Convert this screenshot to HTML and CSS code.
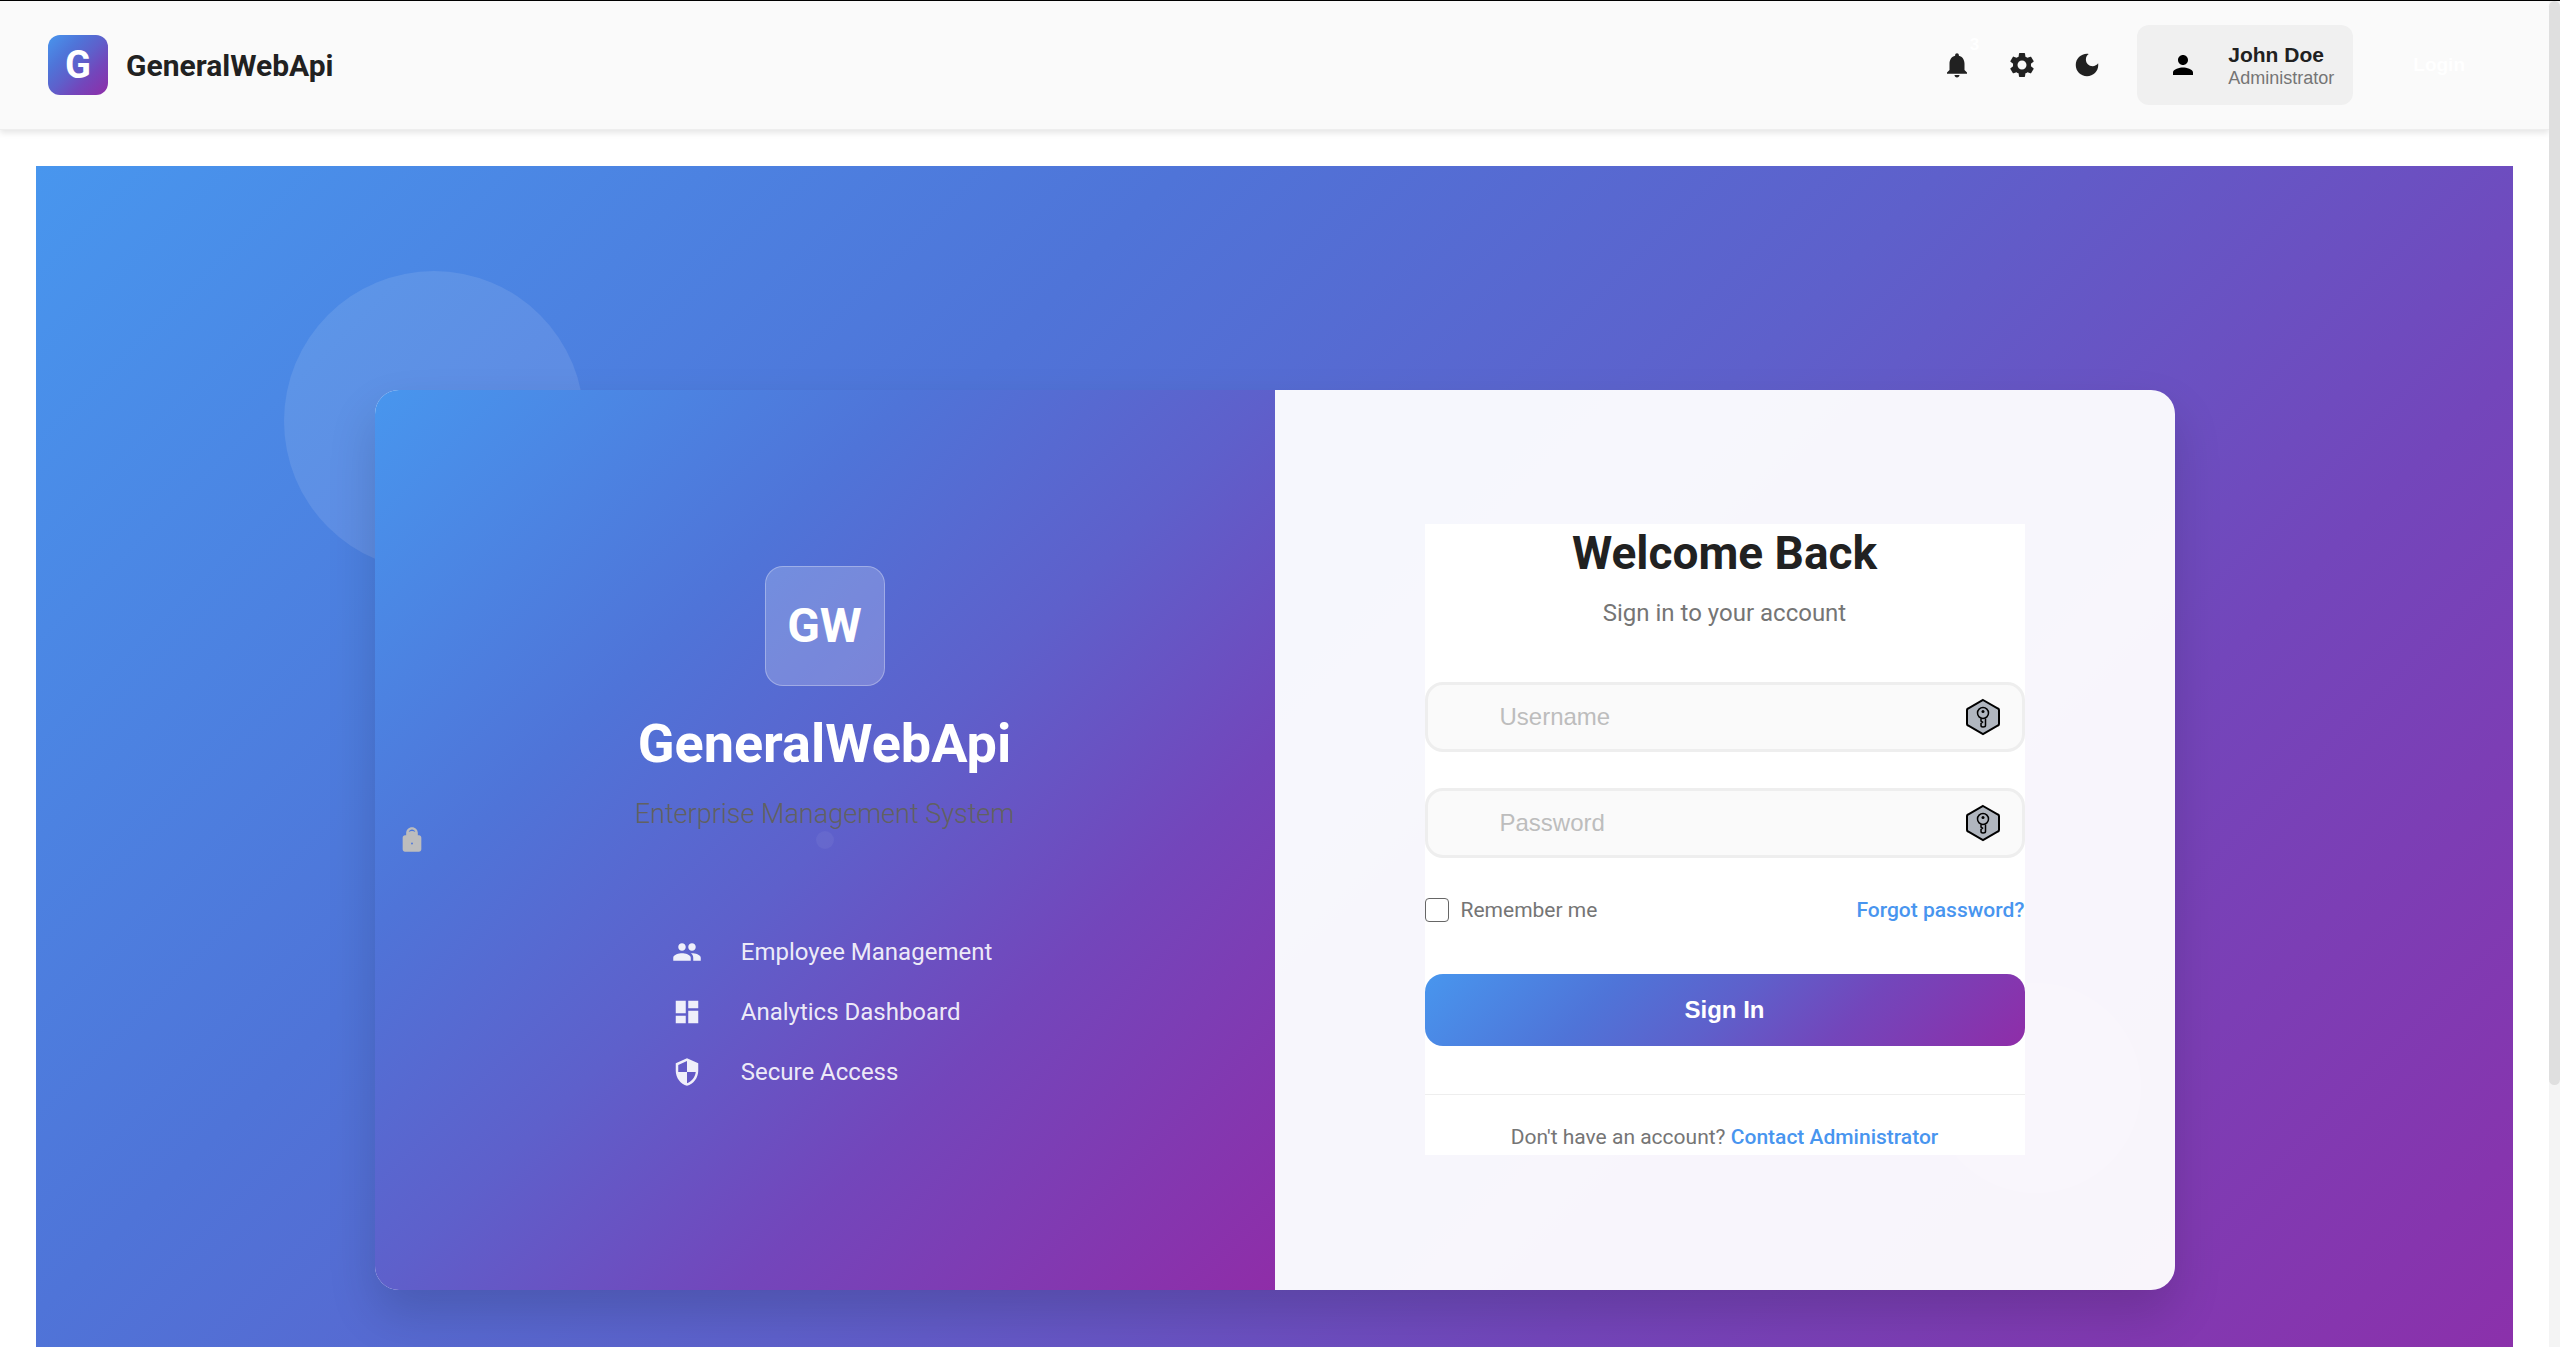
FILE: index.html
```html
<!DOCTYPE html>
<html lang="en">
<head>
<meta charset="utf-8">
<title>GeneralWebApi</title>
<link rel="stylesheet" href="styles.css">
</head>
<body>
<div class="app">
  <div class="page">
    <header class="topbar">
      <div class="brand">
        <div class="brand-mark">G</div>
        <span class="brand-name">GeneralWebApi</span>
      </div>
      <div class="actions">
        <button class="icon-button" type="button" aria-label="Notifications">
          <svg class="icon" viewBox="0 0 24 24"><path d="M12 22c1.1 0 2-.9 2-2h-4c0 1.1.89 2 2 2zm6-6v-5c0-3.070-1.640-5.640-4.500-6.320V4c0-.83-.67-1.500-1.500-1.500s-1.500.67-1.500 1.500v.68C7.630 5.360 6 7.920 6 11v5l-2 2v1h16v-1l-2-2z"/></svg>
          <span class="badge">3</span>
        </button>
        <button class="icon-button" type="button" aria-label="Settings">
          <svg class="icon" viewBox="0 0 24 24"><path d="M19.140 12.940c.04-.3.060-.61.060-.94 0-.32-.02-.64-.07-.94l2.030-1.580c.18-.14.23-.41.120-.61l-1.920-3.320c-.12-.22-.37-.29-.59-.22l-2.390.96c-.5-.38-1.030-.7-1.620-.94l-.36-2.540c-.04-.24-.24-.41-.48-.41h-3.840c-.24 0-.43.170-.47.410l-.36 2.540c-.59.240-1.130.570-1.620.940l-2.390-.96c-.22-.08-.47 0-.59.220L2.740 8.870c-.12.210-.08.470.120.610l2.030 1.580c-.05.300-.09.630-.09.940s.020.640.070.940l-2.030 1.580c-.18.140-.23.410-.12.610l1.920 3.320c.12.220.37.290.59.220l2.390-.96c.5.380 1.030.7 1.620.940l.36 2.540c.05.240.240.410.480.410h3.840c.24 0 .44-.17.47-.41l.36-2.540c.59-.24 1.130-.56 1.620-.94l2.390.96c.22.080.47 0 .59-.22l1.920-3.320c.12-.22.070-.47-.12-.61l-2.010-1.580zM12 15.600c-1.980 0-3.600-1.620-3.600-3.600s1.620-3.600 3.600-3.600 3.600 1.620 3.600 3.600-1.620 3.600-3.600 3.600z"/></svg>
        </button>
        <button class="icon-button" type="button" aria-label="Dark mode">
          <svg class="icon" viewBox="0 0 24 24"><path d="M12 3c-4.970 0-9 4.030-9 9s4.030 9 9 9 9-4.030 9-9c0-.46-.04-.92-.1-1.360-.98 1.370-2.580 2.260-4.400 2.260-2.980 0-5.400-2.420-5.400-5.400 0-1.810.89-3.420 2.260-4.400C12.920 3.040 12.460 3 12 3z"/></svg>
        </button>
        <button class="user" type="button">
          <svg class="icon user-icon" viewBox="0 0 24 24"><path d="M12 12c2.210 0 4-1.790 4-4s-1.790-4-4-4-4 1.790-4 4 1.790 4 4 4zm0 2c-2.670 0-8 1.340-8 4v2h16v-2c0-2.660-5.330-4-8-4z"/></svg>
          <span class="user-text">
            <span class="user-name">John Doe</span>
            <span class="user-role">Administrator</span>
          </span>
        </button>
        <button class="login" type="button">Login</button>
      </div>
    </header>

    <main class="hero">
      <div class="bubble bubble-large"></div>
      <div class="bubble bubble-medium"></div>
      <section class="card">
        <div class="intro">
          <div class="logo">GW</div>
          <h1 class="product">GeneralWebApi</h1>
          <p class="tagline">Enterprise Management System</p>
          <ul class="features">
            <li class="feature"><svg class="icon" viewBox="0 0 24 24"><path d="M16 11c1.660 0 2.990-1.340 2.990-3S17.660 5 16 5c-1.660 0-3 1.340-3 3s1.340 3 3 3zm-8 0c1.660 0 2.990-1.340 2.990-3S9.660 5 8 5C6.340 5 5 6.340 5 8s1.340 3 3 3zm0 2c-2.330 0-7 1.170-7 3.500V19h14v-2.500c0-2.330-4.670-3.500-7-3.500zm8 0c-.29 0-.62.020-.97.050 1.160.84 1.970 1.970 1.970 3.450V19h6v-2.500c0-2.330-4.670-3.500-7-3.500z"/></svg><span>Employee Management</span></li>
            <li class="feature"><svg class="icon" viewBox="0 0 24 24"><path d="M3 13h8V3H3v10zm0 8h8v-6H3v6zm10 0h8V11h-8v10zm0-18v6h8V3h-8z"/></svg><span>Analytics Dashboard</span></li>
            <li class="feature"><svg class="icon" viewBox="0 0 24 24"><path d="M12 1L3 5v6c0 5.550 3.840 10.740 9 12 5.160-1.260 9-6.450 9-12V5l-9-4zm0 10.990h7c-.53 4.120-3.280 7.790-7 8.940V12H5V6.300l7-3.110v8.800z"/></svg><span>Secure Access</span></li>
          </ul>
        </div>
        <div class="access">
          <form class="form">
            <h2 class="welcome">Welcome Back</h2>
            <p class="hint">Sign in to your account</p>
            <div class="field">
              <input class="input" type="text" aria-label="Username" placeholder="Username">
              <svg class="key" viewBox="0 0 36 38"><path class="key-plate" d="M18 2L33 10.500Q34 11 34 12V26Q34 27 33 27.500L18 36L3 27.500Q2 27 2 26V12Q2 11 3 10.500Z"/><path class="key-shape" d="M16 20.500V23L17.500 24L16 25.500V27.500Q16 29 18 29Q20.500 29 20.500 27.500V20.500"/><circle class="key-shape" cx="18" cy="15" r="5.500"/><circle cx="18" cy="13.500" r="1.500"/></svg>
            </div>
            <div class="field">
              <input class="input" type="password" aria-label="Password" placeholder="Password">
              <svg class="key" viewBox="0 0 36 38"><path class="key-plate" d="M18 2L33 10.500Q34 11 34 12V26Q34 27 33 27.500L18 36L3 27.500Q2 27 2 26V12Q2 11 3 10.500Z"/><path class="key-shape" d="M16 20.500V23L17.500 24L16 25.500V27.500Q16 29 18 29Q20.500 29 20.500 27.500V20.500"/><circle class="key-shape" cx="18" cy="15" r="5.500"/><circle cx="18" cy="13.500" r="1.500"/></svg>
            </div>
            <div class="options">
              <label class="remember"><input class="tick" type="checkbox">Remember me</label>
              <a class="link" href="#forgot">Forgot password?</a>
            </div>
            <button class="submit" type="submit">Sign In</button>
            <p class="help">Don't have an account? <a class="link" href="#contact">Contact Administrator</a></p>
          </form>
        </div>
        <svg class="lock" viewBox="0 0 24 24"><path fill-rule="evenodd" d="M18 8h-1V6c0-2.760-2.240-5-5-5S7 3.240 7 6v2H6c-1.100 0-2 .9-2 2v10c0 1.100.9 2 2 2h12c1.100 0 2-.9 2-2V10c0-1.100-.9-2-2-2zM12 14.200a.8.8 0 1 1 0 1.600a.8.8 0 0 1 0-1.600zM9.200 5.200C9.500 3.800 10.600 3 12 3s2.500.8 2.800 2.200C14 4.500 13 4.200 12 4.200s-2 .3-2.800 1z"/></svg>
        <div class="dot"></div>
      </section>
    </main>
  </div>
  <div class="scrollbar"><div class="thumb"></div></div>
</div>
</body>
</html>
```
FILE: styles.css
```css
* {
  box-sizing: border-box;
}

:root {
  --brand: linear-gradient(135deg, #4896ee 0%, #4f74d8 30%, #5e60cb 50%, #7346bb 70%, #8f2da8 100%);
  --text: #212121;
  --muted: #757575;
  --link: #4895ef;
}

body {
  margin: 0;
  background: #fff;
  color: var(--text);
  font-family: Roboto, "Liberation Sans", sans-serif;
}

button,
input {
  font-family: "Liberation Sans", Arial, sans-serif;
}

h1,
h2,
p,
ul {
  margin: 0;
  padding: 0;
}

.app {
  display: grid;
  grid-template-columns: minmax(0, 1fr) 11px;
  height: 100vh;
  overflow: hidden;
  border-top: 1px solid #000;
}

.page {
  min-height: 0;
  overflow: hidden;
}

.scrollbar {
  background: #f4f4f4;
}

.thumb {
  height: 80.5%;
  border-radius: 6px;
  background: #dfdfdf;
}

.icon {
  display: block;
  width: 30px;
  height: 30px;
  fill: currentColor;
}

/* Top bar */
.topbar {
  display: flex;
  align-items: center;
  justify-content: space-between;
  padding: 24px 48px;
  border-bottom: 1px solid #eee;
  background: #fafafa;
  box-shadow: 0 3px 6px rgba(0, 0, 0, 0.1);
}

.brand {
  display: flex;
  align-items: center;
  gap: 18px;
}

.brand-mark {
  display: grid;
  place-items: center;
  width: 60px;
  height: 60px;
  border-radius: 12px;
  background: var(--brand);
  color: #fff;
  font-size: 38px;
  font-weight: 700;
  line-height: 1;
}

.brand-name {
  font-size: 30px;
  font-weight: 700;
}

.actions {
  display: flex;
  align-items: center;
  gap: 5px;
}

.icon-button {
  position: relative;
  padding: 15px;
  border: 0;
  background: none;
  color: var(--text);
}

.badge {
  position: absolute;
  top: 0;
  right: 8px;
  color: #fff;
  font-size: 17px;
  font-weight: 700;
}

.user {
  display: flex;
  align-items: center;
  gap: 30px;
  height: 80px;
  margin-left: 15px;
  padding: 0 19px 0 31px;
  border: 0;
  border-radius: 12px;
  background: #f0f0f0;
  text-align: left;
}

.user-icon {
  color: #000;
}

.user-text {
  display: grid;
}

.user-name {
  color: var(--text);
  font-size: 21px;
  font-weight: 700;
  line-height: 26px;
}

.user-role {
  color: var(--muted);
  font-size: 18px;
  line-height: 21px;
}

.login {
  margin-left: 19px;
  padding: 18px 36px;
  border: 0;
  background: none;
  color: #fff;
  font-size: 19px;
  font-weight: 700;
}

/* Hero */
.hero {
  position: relative;
  display: grid;
  place-items: center;
  min-height: 100vh;
  margin: 36px;
  overflow: hidden;
  background: var(--brand);
}

.bubble {
  position: absolute;
  border-radius: 50%;
  background: rgba(255, 255, 255, 0.1);
}

.bubble-large {
  top: 105px;
  left: 10%;
  width: 300px;
  height: 300px;
}

.bubble-medium {
  right: 15%;
  bottom: 320px;
  width: 210px;
  height: 210px;
}

.card {
  position: relative;
  display: grid;
  grid-template-columns: 1fr 1fr;
  width: 1800px;
  max-width: 90%;
  min-height: 900px;
  overflow: hidden;
  border-radius: 24px;
  background: rgba(255, 255, 255, 0.95);
  box-shadow: 0 24px 48px rgba(0, 0, 0, 0.15);
}

.intro {
  display: flex;
  flex-direction: column;
  align-items: center;
  justify-content: center;
  padding-bottom: 24px;
  background: var(--brand);
  color: #fff;
}

.logo {
  display: grid;
  place-items: center;
  width: 120px;
  height: 120px;
  margin-bottom: 24px;
  border: 1px solid rgba(255, 255, 255, 0.3);
  border-radius: 18px;
  background: rgba(255, 255, 255, 0.2);
  font-size: 48px;
  font-weight: 700;
}

.product {
  margin-bottom: 12px;
  font-size: 54px;
  font-weight: 700;
  line-height: 68px;
}

.tagline {
  margin-bottom: 96px;
  color: #616161;
  font-size: 27px;
  font-weight: 300;
  line-height: 48px;
}

.features {
  display: grid;
  gap: 24px;
  padding-left: 15px;
  list-style: none;
}

.feature {
  display: flex;
  align-items: center;
  gap: 39px;
  color: rgba(255, 255, 255, 0.9);
  font-size: 24px;
  line-height: 36px;
}

.access {
  display: grid;
  place-items: center;
}

.form {
  width: 600px;
  max-width: 90%;
  background: #fff;
}

.welcome {
  margin-bottom: 13px;
  font-size: 46px;
  font-weight: 700;
  line-height: 58px;
  text-align: center;
}

.hint {
  margin-bottom: 51px;
  color: var(--muted);
  font-size: 24px;
  line-height: 36px;
  text-align: center;
}

.field {
  position: relative;
  margin-bottom: 36px;
}

.input {
  display: block;
  width: 100%;
  height: 70px;
  padding: 0 72px;
  border: 3px solid #eee;
  border-radius: 18px;
  background: #fafafa;
  color: var(--text);
  font-size: 24px;
}

.input::placeholder {
  color: #bdbdbd;
}

.key {
  position: absolute;
  top: 16px;
  right: 24px;
  width: 36px;
  height: 38px;
}

.key-plate {
  fill: #b0b6bf;
  stroke: #000;
  stroke-width: 2;
}

.key-shape {
  fill: none;
  stroke: #000;
  stroke-width: 1.5;
}

.options {
  display: flex;
  align-items: center;
  justify-content: space-between;
  margin-bottom: 48px;
  font-size: 21px;
  line-height: 32px;
}

.remember {
  display: flex;
  align-items: center;
  gap: 12px;
  color: var(--muted);
}

.tick {
  width: 24px;
  height: 24px;
  margin: 0;
  border: 1px solid #666;
  border-radius: 4px;
  background: #fff;
  appearance: none;
}

.link {
  color: var(--link);
  font-weight: 500;
  text-decoration: none;
}

.submit {
  display: block;
  width: 100%;
  height: 72px;
  margin-bottom: 48px;
  border: 0;
  border-radius: 18px;
  background: var(--brand);
  color: #fff;
  font-size: 24px;
  font-weight: 700;
}

.help {
  padding: 26px 0 2px;
  border-top: 1px solid #eee;
  color: var(--muted);
  font-size: 21px;
  line-height: 32px;
  text-align: center;
}

.lock {
  position: absolute;
  top: calc(50% - 14px);
  left: 23px;
  width: 28px;
  height: 28px;
  fill: #bdbdbd;
}

.dot {
  position: absolute;
  top: calc(50% - 9px);
  left: calc(25% - 9px);
  width: 18px;
  height: 18px;
  border-radius: 50%;
  background: rgba(255, 255, 255, 0.05);
}
```
